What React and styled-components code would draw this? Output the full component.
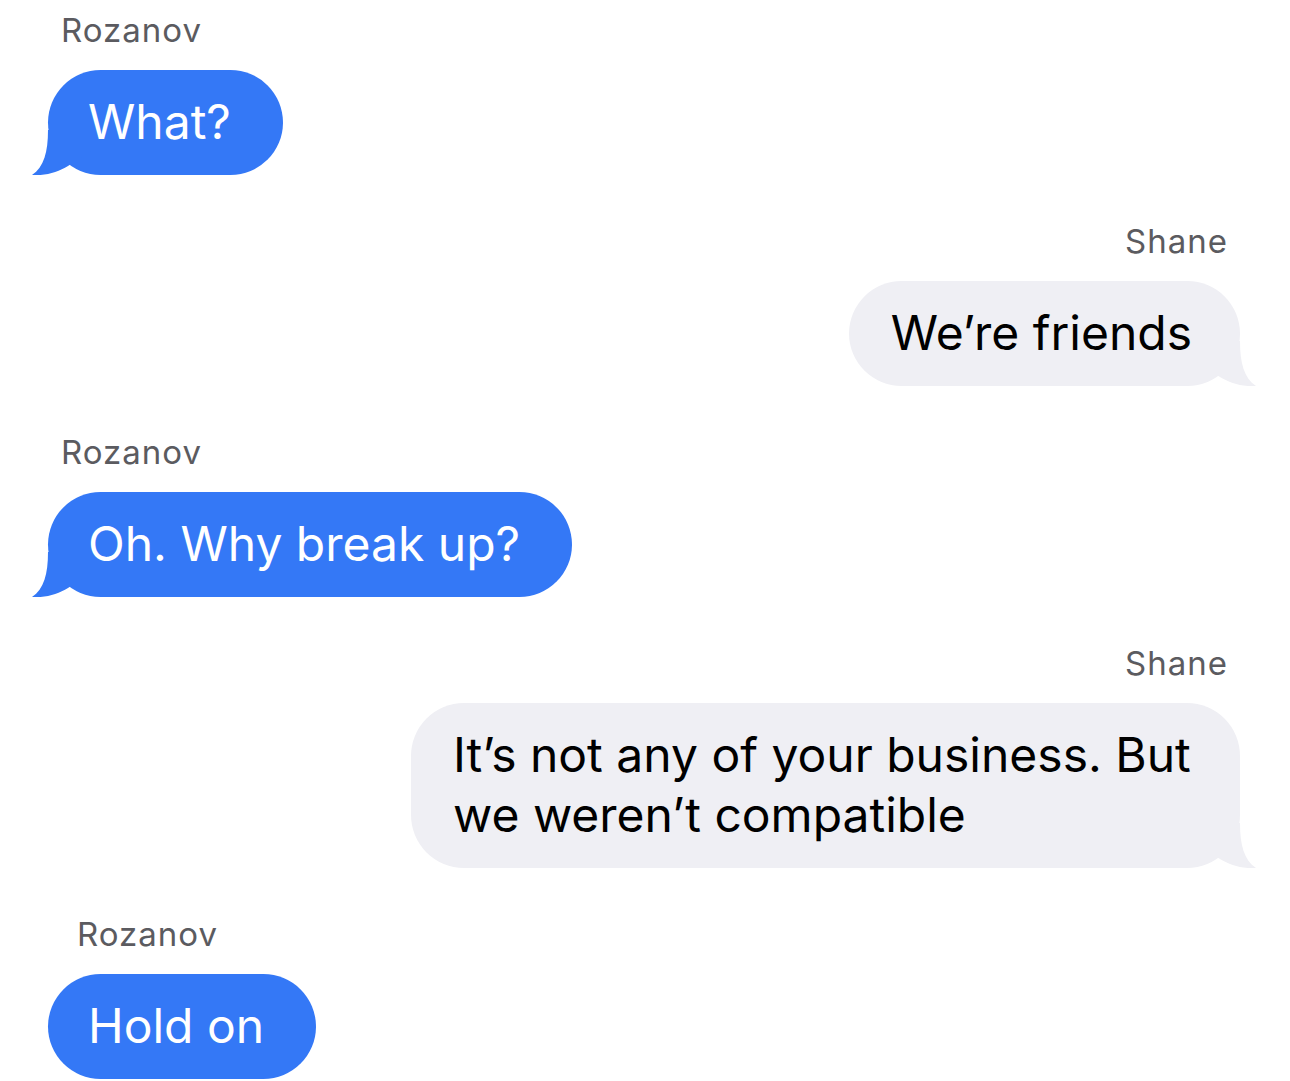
import React from "react";
import styled, { createGlobalStyle } from "styled-components";

const Global = createGlobalStyle`
  html, body { margin: 0; padding: 0; background: #ffffff; }
  body { font-family: Inter, "Open Sans", "Liberation Sans", sans-serif; -webkit-font-smoothing: antialiased; }
`;

const Thread = styled.div`
  display: flex;
  flex-direction: column;
  gap: 46px;
  padding: 10px 50px 0 48px;
  width: 1290px;
  box-sizing: border-box;
`;

const Group = styled.div`
  display: flex;
  flex-direction: column;
  gap: 20px;
  align-items: ${(p) => (p.$out ? "flex-end" : "flex-start")};
`;

const Sender = styled.div`
  font-size: 33px;
  line-height: 40px;
  color: #5b5b60;
  letter-spacing: 1px;
  padding: 0 ${(p) => (p.$out ? "12px" : "0")} 0 ${(p) => (p.$out ? "0" : `${p.$indent ?? 13}px`)};
`;

const Bubble = styled.div`
  position: relative;
  max-width: 829px;
  box-sizing: border-box;
  padding: 22px ${(p) => (p.$out ? "48px" : "52px")} 23px ${(p) => (p.$out ? "42px" : "40px")};
  border-radius: 53px;
  font-size: 48px;
  line-height: 60px;
  letter-spacing: 0;
  background: ${(p) => (p.$out ? "#efeff4" : "#3478f6")};
  color: ${(p) => (p.$out ? "#000000" : "#ffffff")};
`;

const TailSvg = styled.svg`
  position: absolute;
  bottom: 0;
  width: 60px;
  height: 45px;
  ${(p) => (p.$out ? "right: -16px; transform: scaleX(-1);" : "left: -16px;")}
`;

const Text = styled.span`
  position: relative;
  z-index: 1;
`;

function Tail({ out }) {
  return (
    <TailSvg $out={out} viewBox="0 0 60 45" aria-hidden="true">
      <path
        d="M16 0 C16 22 12 37 0 45 C14 46 26 42 36 36 L60 20 L60 0 Z"
        fill={out ? "#efeff4" : "#3478f6"}
      />
    </TailSvg>
  );
}

const messages = [
  { from: "Rozanov", text: "What?", tail: true },
  { from: "Shane", out: true, text: "We’re friends", tail: true },
  { from: "Rozanov", text: "Oh. Why break up?", tail: true },
  {
    from: "Shane",
    out: true,
    text: "It’s not any of your business. But we weren’t compatible",
    tail: true,
  },
  { from: "Rozanov", text: "Hold on", tail: false, indent: 29 },
];

export default function App() {
  return (
    <>
      <Global />
      <Thread>
        {messages.map((m, i) => (
          <Group key={i} $out={m.out}>
            <Sender $out={m.out} $indent={m.indent}>
              {m.from}
            </Sender>
            <Bubble $out={m.out}>
              {m.tail && <Tail out={m.out} />}
              <Text>{m.text}</Text>
            </Bubble>
          </Group>
        ))}
      </Thread>
    </>
  );
}
